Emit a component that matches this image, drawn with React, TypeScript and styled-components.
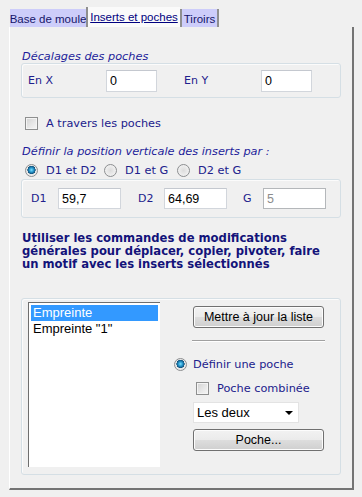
import React from "react";
import styled, { createGlobalStyle } from "styled-components";

const Global = createGlobalStyle`
  html, body { margin: 0; padding: 0; background: #f0f0f0; }
  body {
    width: 362px; height: 497px; overflow: hidden;
    font-family: "DejaVu Sans", Verdana, sans-serif;
  }
  * { box-sizing: border-box; }
`;

const Page = styled.div`
  padding: 7px 0 0 9px;
`;

const TabStrip = styled.div`
  display: flex;
  align-items: flex-end;
  height: 20px;
  padding-left: 1px;
`;

const Tab = styled.div<{ $active?: boolean; $w: number; $sep?: boolean; $end?: boolean }>`
  width: ${(p) => p.$w}px;
  height: ${(p) => (p.$active ? 20 : 18)}px;
  background: ${(p) => (p.$active ? "#fafafa" : "#cdcdfa")};
  border-left: ${(p) => (p.$sep ? "2px solid #8f8f8f" : "none")};
  border-right: ${(p) => (p.$end ? "2px solid #8f8f8f" : "none")};
  font-family: "Liberation Sans", Arial, sans-serif;
  font-size: 11.5px;
  color: ${(p) => (p.$active ? "#000080" : "#16166a")};
  text-decoration: ${(p) => (p.$active ? "underline" : "none")};
  display: flex;
  align-items: center;
  justify-content: center;
  padding-top: ${(p) => (p.$active ? 0 : 2)}px;
  white-space: nowrap;
`;

const Panel = styled.div`
  width: 345px;
  height: 463px;
  border-left: 1px solid #ffffff;
  border-right: 2px solid #747474;
  border-bottom: 2px solid #747474;
  padding: 0 0 0 11px;
  display: flex;
  flex-direction: column;
`;

const Caption = styled.div<{ $mt: number }>`
  margin-top: ${(p) => p.$mt}px;
  font-size: 11.3px;
  line-height: 13px;
  font-style: italic;
  color: #1d1d9a;
  padding-left: 1px;
  white-space: nowrap;
`;

const Group = styled.div<{ $h: number; $mt: number }>`
  margin-top: ${(p) => p.$mt}px;
  width: 320px;
  height: ${(p) => p.$h}px;
  border: 1px solid #d5dfe5;
  border-radius: 3px;
  box-shadow: inset 1px 1px 0 #fbfbfb;
  display: flex;
  align-items: center;
`;

const Label = styled.span<{ $w: number; $pl?: number }>`
  width: ${(p) => p.$w}px;
  padding-left: ${(p) => p.$pl ?? 0}px;
  font-size: 11px;
  color: #20208c;
  white-space: nowrap;
  flex: none;
`;

const Field = styled.input<{ $w: number; $h: number }>`
  width: ${(p) => p.$w}px;
  height: ${(p) => p.$h}px;
  flex: none;
  border: 1px solid #d2d6dc;
  border-top-color: #c4c8cf;
  background: #ffffff;
  font-family: "Liberation Sans", Arial, sans-serif;
  font-size: 12.5px;
  color: #000;
  padding: 0 0 0 3px;
  outline: none;
  &:disabled {
    border-color: #b4b7ba;
    color: #8c8c8c;
    background: #ffffff;
  }
`;

const Row = styled.div<{ $mt: number; $ml?: number }>`
  margin-top: ${(p) => p.$mt}px;
  margin-left: ${(p) => p.$ml ?? 0}px;
  height: 13px;
  display: flex;
  align-items: center;
`;

const Check = styled.span`
  width: 13px;
  height: 13px;
  flex: none;
  border: 1px solid #8e8f8f;
  background: linear-gradient(135deg, #d2d2d2 0%, #e9e9e9 60%, #f6f6f6 100%);
  box-shadow: inset 0 0 0 1px #f4f4f4;
`;

const Radio = styled.span<{ $on?: boolean }>`
  width: 13px;
  height: 13px;
  flex: none;
  border-radius: 50%;
  border: 1px solid #8c8e90;
  background: ${(p) =>
    p.$on
      ? "radial-gradient(circle at 50% 45%, #7ee0ff 0%, #2a9bd0 25%, #0d4f7a 48%, #e6e6e6 52%, #f6f6f6 100%)"
      : "radial-gradient(circle at 50% 50%, #dcdcdc 0%, #ececec 55%, #f7f7f7 100%)"};
`;

const OptText = styled.span<{ $gap: number; $w?: number }>`
  margin-left: ${(p) => p.$gap}px;
  width: ${(p) => (p.$w ? `${p.$w}px` : "auto")};
  font-size: 11.3px;
  color: #20208c;
  white-space: nowrap;
  flex: none;
`;

const Note = styled.div`
  margin-top: 14px;
  padding-left: 1px;
  font-size: 11.6px;
  font-weight: bold;
  line-height: 13px;
  color: #13137a;
  white-space: nowrap;
`;

const Pane = styled.div`
  width: 100%;
  height: 100%;
  display: flex;
  align-items: flex-start;
  padding: 3px 0 0 6px;
`;

const List = styled.div`
  width: 132px;
  height: 165px;
  flex: none;
  background: #ffffff;
  border-left: 1px solid #6e6e6e;
  border-top: 1px solid #6e6e6e;
  padding: 2px 2px 0 2px;
  font-family: "Liberation Sans", Arial, sans-serif;
  font-size: 13px;
`;

const Item = styled.div<{ $sel?: boolean }>`
  height: 16px;
  line-height: 16px;
  padding-left: 2px;
  background: ${(p) => (p.$sel ? "#3399ff" : "transparent")};
  color: ${(p) => (p.$sel ? "#ffffff" : "#000000")};
  white-space: nowrap;
`;

const Side = styled.div`
  margin-left: 32px;
  display: flex;
  flex-direction: column;
  align-items: flex-start;
`;

const Button = styled.div<{ $mt: number }>`
  margin-top: ${(p) => p.$mt}px;
  margin-left: 1px;
  width: 131px;
  height: 22px;
  border: 1px solid #707070;
  border-radius: 3px;
  background: linear-gradient(#f2f2f2 0%, #ebebeb 48%, #dddddd 52%, #cfcfcf 100%);
  box-shadow: inset 0 0 0 1px #fcfcfc;
  display: flex;
  align-items: center;
  justify-content: center;
  font-family: "Liberation Sans", Arial, sans-serif;
  font-size: 12.5px;
  color: #000;
  white-space: nowrap;
`;

const Rule = styled.div`
  margin-top: 12px;
  width: 133px;
  height: 2px;
  border-top: 1px solid #a0a0a0;
  border-bottom: 1px solid #ffffff;
`;

const Select = styled.div`
  margin-top: 7px;
  margin-left: 1px;
  width: 106px;
  height: 21px;
  background: #ffffff;
  border: 1px solid #e3e3e3;
  display: flex;
  align-items: center;
  justify-content: space-between;
  padding: 0 5px 0 3px;
  font-family: "Liberation Sans", Arial, sans-serif;
  font-size: 13px;
  color: #000;
`;

const Arrow = styled.span`
  width: 0;
  height: 0;
  border-left: 4px solid transparent;
  border-right: 4px solid transparent;
  border-top: 4px solid #000;
`;

export default function App() {
  return (
    <>
      <Global />
      <Page>
        <TabStrip>
          <Tab $w={76}>Base de moule</Tab>
          <Tab $w={94} $active $sep>Inserts et poches</Tab>
          <Tab $w={39} $sep $end>Tiroirs</Tab>
        </TabStrip>
        <Panel>
          <Caption $mt={23}>Décalages des poches</Caption>
          <Group $h={35} $mt={0}>
            <Label $w={84} $pl={6}>En X</Label>
            <Field $w={51} $h={22} readOnly value="0" />
            <Label $w={104} $pl={27}>En Y</Label>
            <Field $w={51} $h={22} readOnly value="0" />
          </Group>
          <Row $mt={19} $ml={4}>
            <Check />
            <OptText $gap={8}>A travers les poches</OptText>
          </Row>
          <Caption $mt={15}>Définir la position verticale des inserts par :</Caption>
          <Row $mt={6} $ml={4}>
            <Radio $on />
            <OptText $gap={8} $w={58}>D1 et D2</OptText>
            <Radio />
            <OptText $gap={8} $w={52}>D1 et G</OptText>
            <Radio />
            <OptText $gap={8}>D2 et G</OptText>
          </Row>
          <Group $h={39} $mt={2}>
            <Label $w={36} $pl={9}>D1</Label>
            <Field $w={63} $h={21} readOnly value="59,7" />
            <Label $w={43} $pl={17}>D2</Label>
            <Field $w={63} $h={21} readOnly value="64,69" />
            <Label $w={36} $pl={16}>G</Label>
            <Field $w={63} $h={21} disabled value="5" />
          </Group>
          <Note>
            Utiliser les commandes de modifications
            <br />
            générales pour déplacer, copier, pivoter, faire
            <br />
            un motif avec les inserts sélectionnés
          </Note>
          <Group $h={177} $mt={27}>
            <Pane>
              <List>
                <Item $sel>Empreinte</Item>
                <Item>Empreinte "1"</Item>
              </List>
              <Side>
                <Button $mt={4}>Mettre à jour la liste</Button>
                <Rule />
                <Row $mt={16} $ml={-18}>
                  <Radio $on />
                  <OptText $gap={6}>Définir une poche</OptText>
                </Row>
                <Row $mt={11} $ml={4}>
                  <Check />
                  <OptText $gap={8}>Poche combinée</OptText>
                </Row>
                <Select>
                  Les deux
                  <Arrow />
                </Select>
                <Button $mt={6}>Poche...</Button>
              </Side>
            </Pane>
          </Group>
        </Panel>
      </Page>
    </>
  );
}
